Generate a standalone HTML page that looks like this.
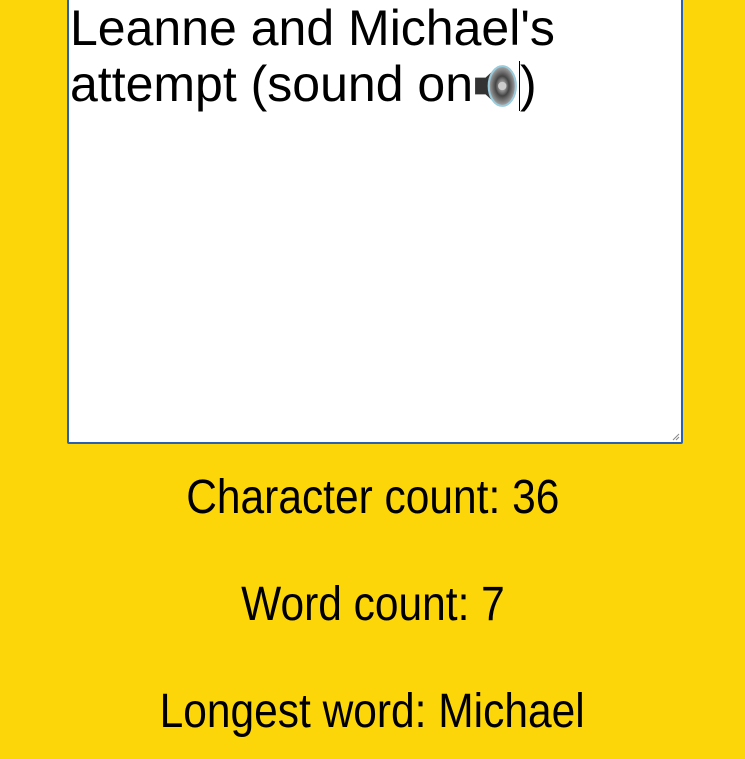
<!DOCTYPE html>
<html><head><style>
html,body{margin:0;padding:0;background:#fdd60a;width:745px;height:759px;overflow:hidden}
.ta{position:absolute;left:67px;top:-10px;width:612px;height:450px;background:#fff;border:2px solid #2b5fb0;border-radius:2px}
.ta div{position:absolute;left:1px;top:8px;font-family:"Liberation Sans",sans-serif;font-size:50px;line-height:56px;color:#000;white-space:nowrap}
.cur{display:inline-block;width:1px;height:50px;background:#000;vertical-align:-10px}
.spk{display:inline-block;width:46px;height:46px;vertical-align:-8px;}
.l{position:absolute;left:0;width:745px;text-align:center;font-family:"Liberation Sans",sans-serif;font-size:48px;color:#000}
.l span{display:inline-block;transform:scaleX(0.885)}
</style></head><body>
<div class="ta"><div>Leanne and Michael's<br>attempt (sound on<svg class="spk" viewBox="0 0 44 44"><defs><radialGradient id="g" cx="50%" cy="50%" r="50%"><stop offset="0" stop-color="#ddd"/><stop offset="0.5" stop-color="#444"/><stop offset="1" stop-color="#aaa"/></radialGradient></defs><path d="M2 14h10l12-11v38L12 30H2z" fill="#333"/><ellipse cx="28" cy="22" rx="13" ry="19" fill="url(#g)" stroke="#9cd" stroke-width="2"/><circle cx="28" cy="22" r="4" fill="#ccc"/></svg><span class="cur"></span>)</div>
<svg style="position:absolute;right:1px;bottom:1px" width="8" height="8"><path d="M7 1L1 7M7 4L4 7" stroke="#888" stroke-width="1"/></svg></div>
<div class="l" style="top:470px"><span>Character count: 36</span></div>
<div class="l" style="top:577px"><span>Word count: 7</span></div>
<div class="l" style="top:684px"><span>Longest word: Michael</span></div>
</body></html>
